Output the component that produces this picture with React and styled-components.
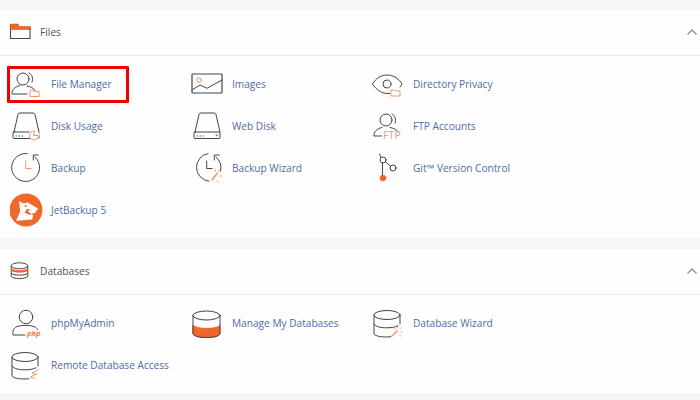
import React from "react";
import styled, { createGlobalStyle } from "styled-components";

const Global = createGlobalStyle`
  html, body { margin: 0; padding: 0; background: #f6f6f6; }
  body { width: 700px; height: 400px; overflow: hidden; font-family: "Open Sans", "Liberation Sans", sans-serif; }
`;
const Page = styled.div`
  display: flex; flex-direction: column; gap: 11px; padding-top: 10px;
`;
const Panel = styled.section`
  background: #fefefe;
`;
const Header = styled.header`
  height: 43px; padding: 0 2px 2px 10px; display: flex; align-items: center;
  border-bottom: 1px solid #e9eaf3;
`;
const HeadIcon = styled.span`
  width: 30px; height: 20px; display: flex; align-items: center;
`;
const Title = styled.h2`
  margin: 0; flex: 1; font-size: 10.2px; font-weight: 400; color: #4c5560; line-height: 16px;
`;
const Grid = styled.div`
  display: grid; grid-template-columns: 181px 181px 181px; grid-auto-rows: 42px;
  padding: 7px 0 7px 10px;
`;
const Item = styled.a`
  position: relative; display: flex; align-items: center; gap: 8px;
  font-size: 10.15px; color: #4f6ba6; line-height: 16px; white-space: nowrap;
  ${p => p.$active && `
    &::after {
      content: ""; position: absolute; left: -3px; top: 3px; width: 122px; height: 37px;
      box-sizing: border-box; border: 3px solid #f00000; border-radius: 1px;
    }
  `}
`;
const Icon = styled.svg`
  width: 33px; height: 36px; flex: none; fill: none; stroke: #454545; stroke-width: 1;
  stroke-linecap: round; stroke-linejoin: round;
  .o { stroke: #f7936a; }
  .f { fill: #f2652a; stroke: #f2652a; }
`;

const Svg = ({ children }) => <Icon viewBox="0 0 33 36">{children}</Icon>;

const Person = () => (
  <>
    <circle cx="13" cy="13" r="6" />
    <path d="M19 7c3 1.500 4.500 5 3 9" />
    <path d="M17 28H2c-.5-4 3-7.500 8-8.500M17 20c3.500.5 6.500 2 8 4.500" />
  </>
);

const FileMgr = () => (
  <Svg>
    <Person />
    <path className="o" d="M20 25v5.500h9V25.500h-4.500L23.500 24H21z" />
  </Svg>
);
const Images = () => (
  <Svg>
    <rect x="1" y="8" width="30" height="19" rx=".5" strokeWidth="1.200" />
    <path d="M1 24l8-5 7 3.300L31 14" />
    <circle className="o" cx="8" cy="14" r="2.300" />
  </Svg>
);
const Eye = () => (
  <Svg>
    <path d="M18 27.500C9 28.500 4 23 .5 18 3.500 13 8.500 9 15 9c7 0 12 4 15 9-.5 1-1.200 2-2 3" />
    <circle cx="15" cy="18" r="4" />
    <path className="o" d="M19 24.500v5.500h9v-5h-4.500L22.500 24H20z" />
  </Svg>
);
const Disk = ({ children }) => (
  <Svg>
    <path d="M4 24L8 6.500Q8.300 5 10 5H23Q24.700 5 25 6.500L29 24" />
    <rect x="3" y="24" width="26" height="6.500" rx="1" />
    <path d="M6 28h.5M9 28h.5M12 28h.5" />
    {children}
  </Svg>
);
const Ftp = () => (
  <Svg>
    <circle cx="14" cy="12" r="6" />
    <path d="M20 6c3 1.500 4.500 5 3 9" />
    <path d="M9.500 28H2c-.5-4 3-7.500 8-8.500M18 19.500c3.500.5 6.500 2 8 4.500" />
    <text x="11" y="31" fontFamily="Open Sans" fontSize="10" stroke="none" fill="#f7936a" letterSpacing=".5">FTP</text>
  </Svg>
);
const Hand = ({ orange }) => (
  <path className={orange ? "o" : undefined} d="M15.700 11v7.500h5.500" />
);
const Clock = ({ children }) => (
  <Svg>
    <path d="M17 3.500A14 14 0 1 0 25 7" />
    <path d="M23.300 10V5h5" />
    {children}
  </Svg>
);
const ClockWizard = () => (
  <Svg>
    <path d="M17 3.500A14 14 0 0 0 18 31.200" />
    <path d="M25 7A14 14 0 0 1 29.500 21" />
    <path d="M23.300 10V5h5" />
    <Hand />
    <path className="o" d="M21 30l5-6.500" strokeWidth="1.500" />
    <path className="o" d="M27 22l1.500-1M29 26h1.500M24.500 21v-1M26 31l1 1" />
  </Svg>
);
const Git = () => (
  <Svg>
    <circle cx="11" cy="10" r="3" />
    <circle cx="21" cy="18" r="3" />
    <path d="M7.500 4L9 7.500M10.500 13v13M13.500 12l5 4" />
    <circle className="f" cx="11" cy="28" r="2.800" />
  </Svg>
);
const Jet = () => (
  <Svg>
    <circle cx="16" cy="18" r="16.500" fill="#f2682a" stroke="none" />
    <path fill="#fff" stroke="none" d="M9 9l4.500 2.500 4-1 3 1.500 7.500 4.500-3 4.500-4.800.8 3 1.200-1 4.500-16 1.200 4-9.500z" />
    <path fill="#f2682a" stroke="none" d="M14.500 20.500l2.500-3.500 4 .5-3 1.500 3 3-1 1z" />
    <circle cx="15.500" cy="14" r="1" fill="#f2682a" stroke="none" />
  </Svg>
);
const Php = () => (
  <Svg>
    <circle cx="16" cy="12" r="6.800" />
    <path d="M15 30H3c-.5-4 .5-7 4-8.500 4-1.500 13-1.500 17 0 1.500.5 3 1.500 3.500 3" />
    <text x="17" y="31" fontFamily="Open Sans" fontSize="7.500" fontWeight="700" fontStyle="italic" stroke="none" fill="#f2804a">php</text>
  </Svg>
);
const ManageDb = () => (
  <Svg>
    <path className="f" d="M2 20.500c4 4 23 4 27 0V29c-1.500 2.500-7 3.500-13.500 3.500S3.500 31.500 2 29z" />
    <ellipse cx="15.500" cy="10.500" rx="13.500" ry="4.500" />
    <path d="M2 10.500V29c1.500 2.500 7 3.500 13.500 3.500S27.500 31.500 29 29V10.500" />
  </Svg>
);
const Db = ({ children }) => (
  <Svg>
    <ellipse cx="15" cy="10" rx="13" ry="4.500" />
    <path d="M2 10v19c1.500 2.200 7 3 13 3 1.500 0 3-.1 4-.2M28 10v9" />
    <path d="M2 19c2 3 7 3.800 13 3.800 4 0 8-.5 11-2" />
    {children}
  </Svg>
);
const Chevron = () => (
  <svg width="12" height="8" viewBox="0 0 12 8" fill="none" stroke="#7b94c2" strokeWidth="1.400">
    <path d="M1.500 6.500L6 2l4.500 4.500" />
  </svg>
);
const FolderHead = () => (
  <svg width="21" height="17" viewBox="0 0 21 17" fill="none" stroke="#454545" strokeWidth="1.100">
    <path d="M.5 1.500V15.500H20V4.500" />
    <path d="M.5 1H8L9.500 3.500H20.500V6.500H.5z" fill="#f2682a" stroke="#a9572f" strokeWidth=".5" />
  </svg>
);
const DbHead = () => (
  <svg width="19" height="18" viewBox="0 0 19 18" fill="none" stroke="#454545" strokeWidth="1">
    <ellipse cx="9.500" cy="3.800" rx="8.300" ry="3" />
    <path d="M1.200 3.800V14c1 3.500 15.600 3.500 16.600 0V3.800" />
    <path d="M1.500 7.500c2 2.500 14 2.500 16 0" stroke="#f2682a" strokeWidth="2.400" />
    <path d="M1.200 11c1 2.800 15.600 2.800 16.600 0" />
  </svg>
);

const files = [
  ["File Manager", <FileMgr />, true],
  ["Images", <Images />],
  ["Directory Privacy", <Eye />],
  ["Disk Usage", <Disk><circle cx="24" cy="27" r="5" fill="#fefefe" stroke="#fefefe" /><path className="o" d="M24 23a4.500 4.500 0 1 0 4.500 4.500H24z" /></Disk>],
  ["Web Disk", <Disk><circle className="f" cx="25.500" cy="27.300" r=".6" /></Disk>],
  ["FTP Accounts", <Ftp />],
  ["Backup", <Clock><Hand orange /></Clock>],
  ["Backup Wizard", <ClockWizard />],
  ["Git™ Version Control", <Git />],
  ["JetBackup 5", <Jet />],
];
const databases = [
  ["phpMyAdmin", <Php />],
  ["Manage My Databases", <ManageDb />],
  ["Database Wizard", <Db><path className="o" d="M20 31l5-5" strokeWidth="1.500" /><path className="o" d="M25.500 23v-1M29 27h1M28.500 23.500l.8-.8M23.500 24l-.8-.8M28 30.500l.8.8" /></Db>],
  ["Remote Database Access", <Db><path className="o" d="M28 23l-6 3 4 1.500M26.500 27l-6 3 4 1.500" /></Db>],
];

const Section = ({ icon, title, items }) => (
  <Panel>
    <Header>
      <HeadIcon>{icon}</HeadIcon>
      <Title>{title}</Title>
      <Chevron />
    </Header>
    <Grid>
      {items.map(([label, ic, active]) => (
        <Item key={label} $active={active}>{ic}<span>{label}</span></Item>
      ))}
    </Grid>
  </Panel>
);

export default function App() {
  return (
    <>
      <Global />
      <Page>
        <Section icon={<FolderHead />} title="Files" items={files} />
        <Section icon={<DbHead />} title="Databases" items={databases} />
      </Page>
    </>
  );
}
